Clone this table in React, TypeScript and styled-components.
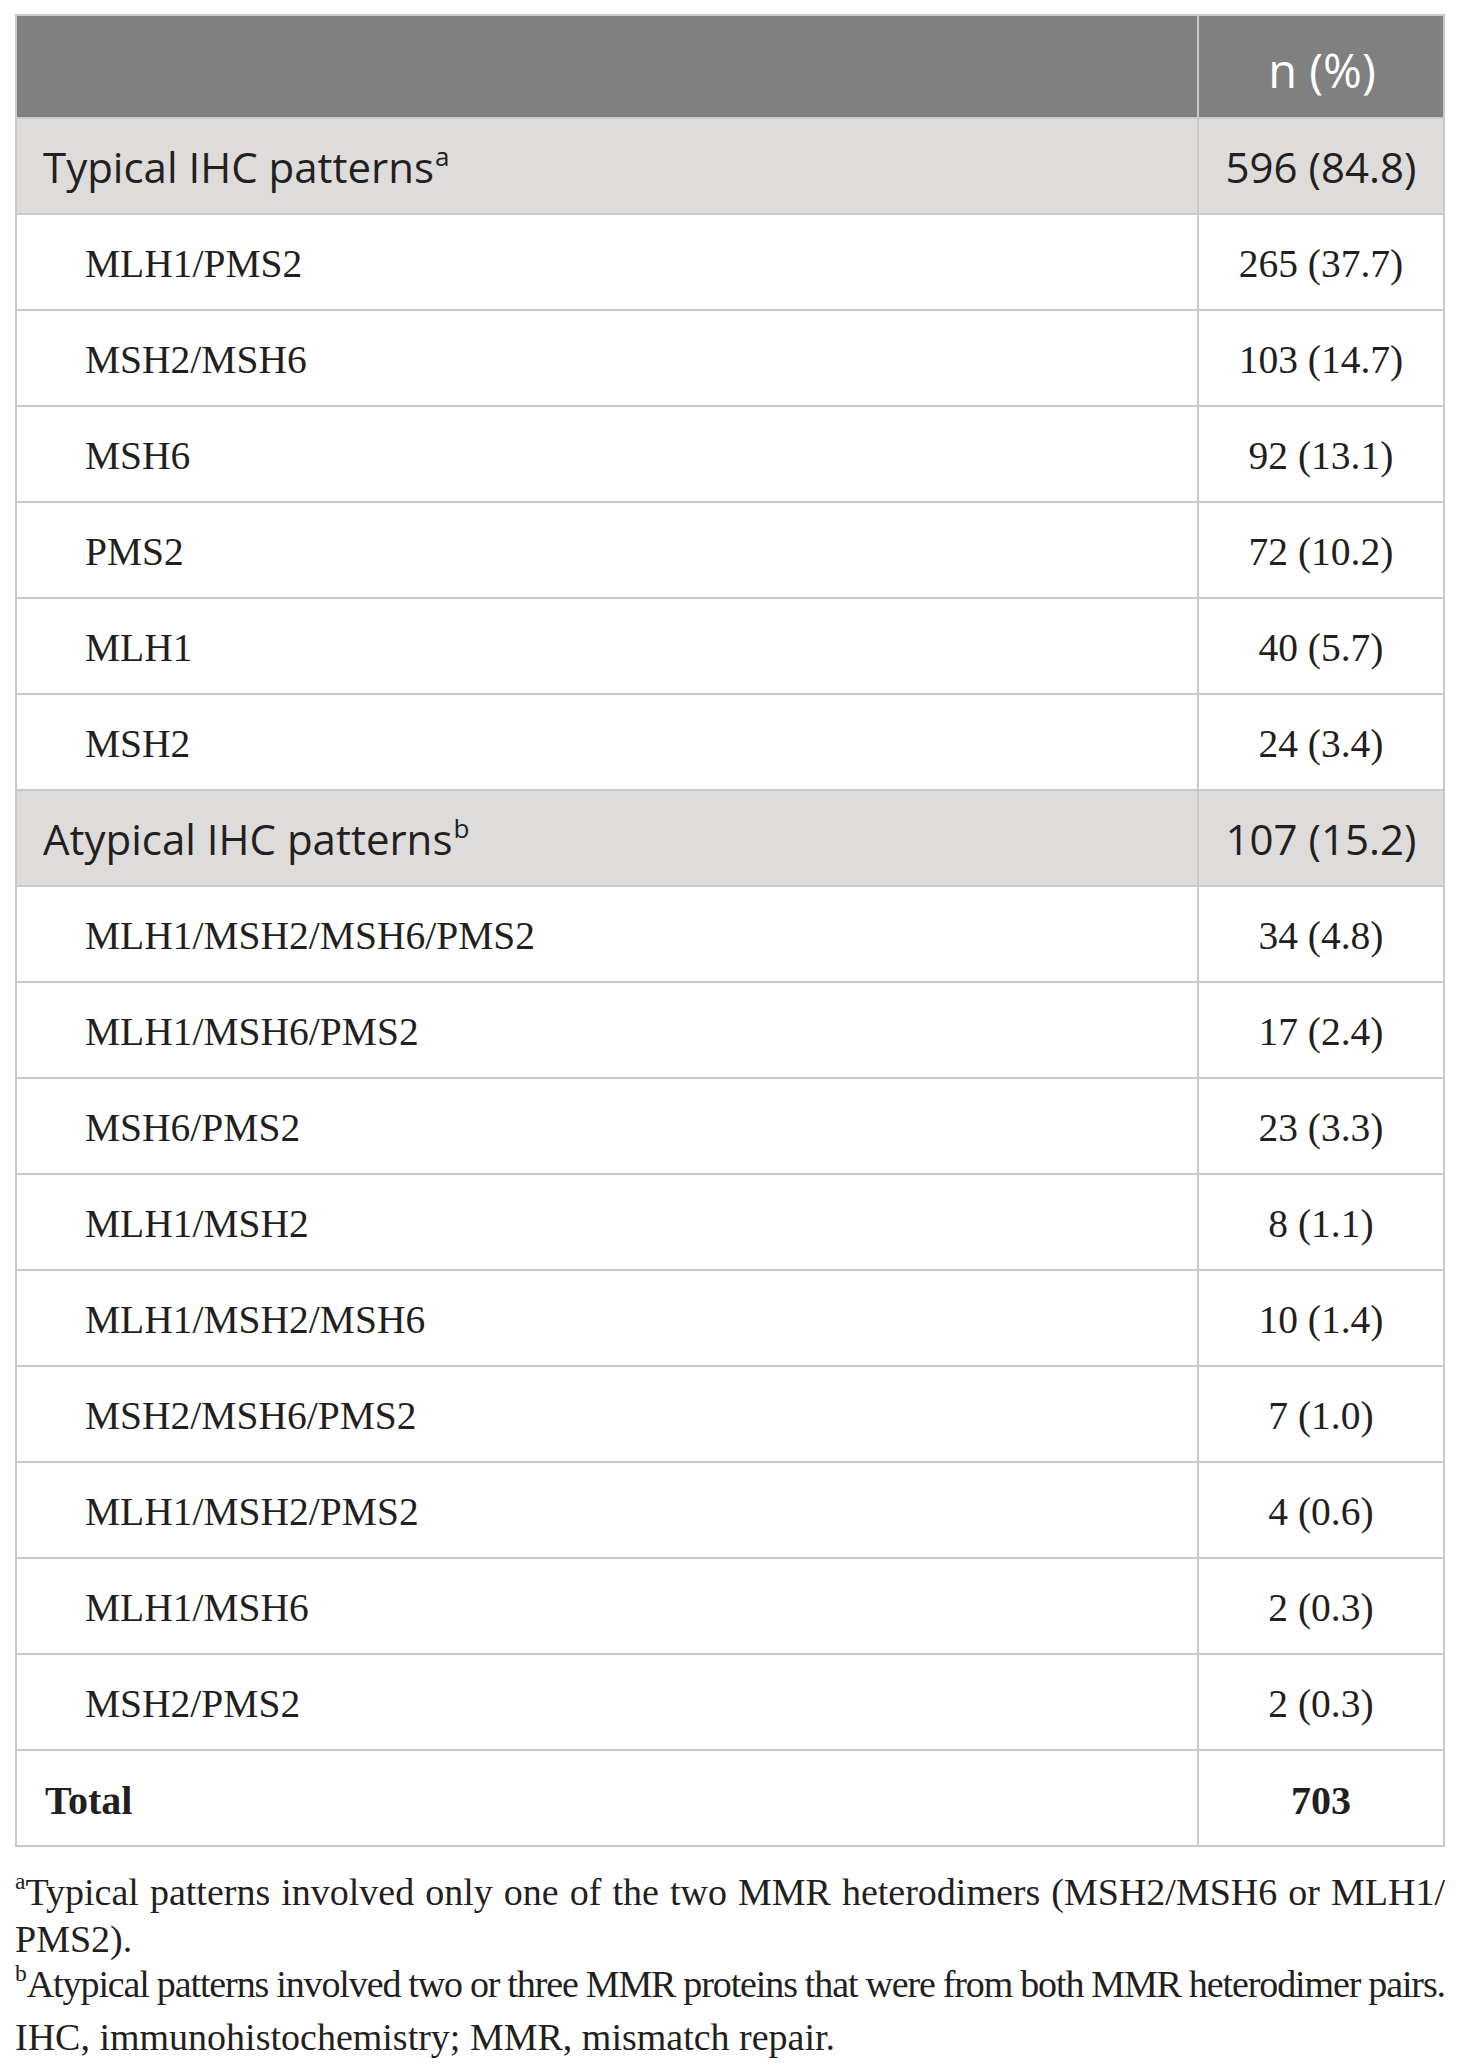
import React from "react";
import styled, { createGlobalStyle } from "styled-components";

const Global = createGlobalStyle`
  html, body { margin: 0; padding: 0; background: #ffffff; }
  body { font-family: "Liberation Serif", "Times New Roman", serif; color: #231f20; }
`;

const Page = styled.div`
  width: 1430px;
  padding: 14px 15px 0 15px;
`;

const Table = styled.div`
  width: 1430px;
  box-sizing: border-box;
  border: 2px solid #c9c9c9;
`;

type Kind = "head" | "section" | "sub" | "total";

const Row = styled.div<{ $kind: Kind }>`
  display: grid;
  grid-template-columns: 1180px 1fr;
  box-sizing: border-box;
  height: ${(p) => (p.$kind === "head" ? "101px" : "96px")};
  border-top: ${(p) => (p.$kind === "head" ? "none" : "2px solid #c9c9c9")};
  background: ${(p) =>
    p.$kind === "head" ? "#808080" : p.$kind === "section" ? "#dddcdb" : "#ffffff"};
`;

const serif = '"Liberation Serif", "Times New Roman", serif';
const sans = '"Open Sans", "Noto Sans", sans-serif';

const sizeFor = (k: Kind) =>
  k === "head" ? "47px" : k === "section" ? "42px" : k === "total" ? "40px" : "39.5px";

const LabelCell = styled.div<{ $kind: Kind }>`
  display: flex;
  align-items: center;
  padding-left: ${(p) => (p.$kind === "sub" ? "68px" : p.$kind === "total" ? "28px" : "26px")};
  font-family: ${(p) => (p.$kind === "section" ? sans : serif)};
  font-size: ${(p) => sizeFor(p.$kind)};
  font-weight: ${(p) => (p.$kind === "total" ? 700 : 400)};
  color: #231f20;
  padding-top: ${(p) => (p.$kind === "section" ? "0" : "4px")};
`;

const ValueCell = styled.div<{ $kind: Kind }>`
  display: flex;
  align-items: center;
  justify-content: center;
  border-left: 2px solid #c9c9c9;
  font-family: ${(p) => (p.$kind === "section" || p.$kind === "head" ? sans : serif)};
  font-size: ${(p) => sizeFor(p.$kind)};
  font-weight: ${(p) => (p.$kind === "total" ? 700 : 400)};
  color: ${(p) => (p.$kind === "head" ? "#ffffff" : "#231f20")};
  padding-top: ${(p) => (p.$kind === "head" ? "6px" : p.$kind === "section" ? "0" : "4px")};
  padding-left: ${(p) => (p.$kind === "head" ? "2px" : "0")};
`;

const Sup = styled.sup`
  font-size: 0.62em;
  vertical-align: 0;
  position: relative;
  top: -0.62em;
  margin-left: 1px;
`;

const Notes = styled.div`
  margin-top: 24px;
  font-family: "Liberation Serif", "Times New Roman", serif;
  font-size: 38px;
  color: #231f20;
`;

const NoteLine = styled.p<{ $justify?: boolean; $tall?: boolean; $condensed?: boolean }>`
  margin: 0;
  line-height: ${(p) => (p.$tall ? "48px" : "42px")};
  white-space: nowrap;
  text-align: ${(p) => (p.$justify ? "justify" : "left")};
  text-align-last: ${(p) => (p.$justify ? "justify" : "left")};
  letter-spacing: ${(p) => (p.$condensed ? "-1.1px" : "0")};
  word-spacing: ${(p) => (p.$condensed ? "-2px" : "0")};
`;

const NoteSup = styled.span`
  font-size: 0.62em;
  position: relative;
  top: -0.68em;
  letter-spacing: 0;
`;

const rows: { kind: Kind; label: string; sup?: string; value: string }[] = [
  { kind: "section", label: "Typical IHC patterns", sup: "a", value: "596 (84.8)" },
  { kind: "sub", label: "MLH1/PMS2", value: "265 (37.7)" },
  { kind: "sub", label: "MSH2/MSH6", value: "103 (14.7)" },
  { kind: "sub", label: "MSH6", value: "92 (13.1)" },
  { kind: "sub", label: "PMS2", value: "72 (10.2)" },
  { kind: "sub", label: "MLH1", value: "40 (5.7)" },
  { kind: "sub", label: "MSH2", value: "24 (3.4)" },
  { kind: "section", label: "Atypical IHC patterns", sup: "b", value: "107 (15.2)" },
  { kind: "sub", label: "MLH1/MSH2/MSH6/PMS2", value: "34 (4.8)" },
  { kind: "sub", label: "MLH1/MSH6/PMS2", value: "17 (2.4)" },
  { kind: "sub", label: "MSH6/PMS2", value: "23 (3.3)" },
  { kind: "sub", label: "MLH1/MSH2", value: "8 (1.1)" },
  { kind: "sub", label: "MLH1/MSH2/MSH6", value: "10 (1.4)" },
  { kind: "sub", label: "MSH2/MSH6/PMS2", value: "7 (1.0)" },
  { kind: "sub", label: "MLH1/MSH2/PMS2", value: "4 (0.6)" },
  { kind: "sub", label: "MLH1/MSH6", value: "2 (0.3)" },
  { kind: "sub", label: "MSH2/PMS2", value: "2 (0.3)" },
  { kind: "total", label: "Total", value: "703" },
];

export default function App() {
  return (
    <>
      <Global />
      <Page>
        <Table>
          <Row $kind="head">
            <LabelCell $kind="head" />
            <ValueCell $kind="head">n (%)</ValueCell>
          </Row>
          {rows.map((r, i) => (
            <Row key={i} $kind={r.kind}>
              <LabelCell $kind={r.kind}>
                <span>
                  {r.label}
                  {r.sup && <Sup>{r.sup}</Sup>}
                </span>
              </LabelCell>
              <ValueCell $kind={r.kind}>{r.value}</ValueCell>
            </Row>
          ))}
        </Table>
        <Notes>
          <NoteLine $justify>
            <NoteSup>a</NoteSup>Typical patterns involved only one of the two MMR heterodimers (MSH2/MSH6 or MLH1/
          </NoteLine>
          <NoteLine>PMS2).</NoteLine>
          <NoteLine $tall $condensed $justify>
            <NoteSup>b</NoteSup>Atypical patterns involved two or three MMR proteins that were from both MMR heterodimer pairs.
          </NoteLine>
          <NoteLine $tall>IHC, immunohistochemistry; MMR, mismatch repair.</NoteLine>
        </Notes>
      </Page>
    </>
  );
}
